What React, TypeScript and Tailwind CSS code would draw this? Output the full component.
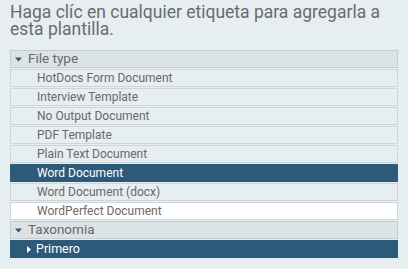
const fileTypes = [
  "HotDocs Form Document",
  "Interview Template",
  "No Output Document",
  "PDF Template",
  "Plain Text Document",
  "Word Document",
  "Word Document (docx)",
  "WordPerfect Document",
];

const selected = "Word Document";
const hovered = "WordPerfect Document";

function DownCaret() {
  return (
    <svg width="7" height="5" viewBox="0 0 7 5" className="shrink-0">
      <path d="M0 0.5h7L3.5 4.5z" fill="#3b5670" />
    </svg>
  );
}

function RightCaret() {
  return (
    <svg width="4" height="7" viewBox="0 0 4 7" className="shrink-0">
      <path d="M0 0v7l4-3.5z" fill="#ffffff" />
    </svg>
  );
}

function GroupHeader({ label }: { label: string }) {
  return (
    <div className="flex h-[18px] items-center gap-[6px] border border-[#c6cdd0] bg-[#dce3e5] pl-[4px] text-[13.5px] text-[#686868]">
      <DownCaret />
      <span className="leading-none">{label}</span>
    </div>
  );
}

function TagRow({ label }: { label: string }) {
  const isSelected = label === selected;
  const isHovered = label === hovered;
  return (
    <div
      className={
        isSelected
          ? "flex h-[18px] items-center border border-[#2d5a79] bg-[#2d5a79] pl-[26px] text-[12px] text-white"
          : isHovered
            ? "flex h-[18px] items-center border border-[#cfd6d9] bg-white pl-[26px] text-[12px] text-[#6b6866]"
            : "flex h-[18px] items-center border border-[#cfd6d9] bg-[#e6eef1] pl-[26px] text-[12px] text-[#6b6866]"
      }
    >
      <span className="leading-none">{label}</span>
    </div>
  );
}

export default function App() {
  return (
    <div
      className="min-h-[269px] w-[408px] bg-[#e6eef1] px-[10px] pt-[4px]"
      style={{ fontFamily: 'Roboto, "Open Sans", sans-serif' }}
    >
      <p className="text-[17.5px] leading-[17px] text-[#6b6b6b]">
        Haga clíc en cualquier etiqueta para agregarla a esta plantilla.
      </p>
      <div className="mt-[12px] flex flex-col gap-px">
        <GroupHeader label="File type" />
        {fileTypes.map((t) => (
          <TagRow key={t} label={t} />
        ))}
        <GroupHeader label="Taxonomia" />
        <div className="flex h-[18px] items-center gap-[5px] border border-[#2d5a79] bg-[#2d5a79] pl-[16px] text-[12.5px] text-white">
          <RightCaret />
          <span className="leading-none">Primero</span>
        </div>
      </div>
    </div>
  );
}
